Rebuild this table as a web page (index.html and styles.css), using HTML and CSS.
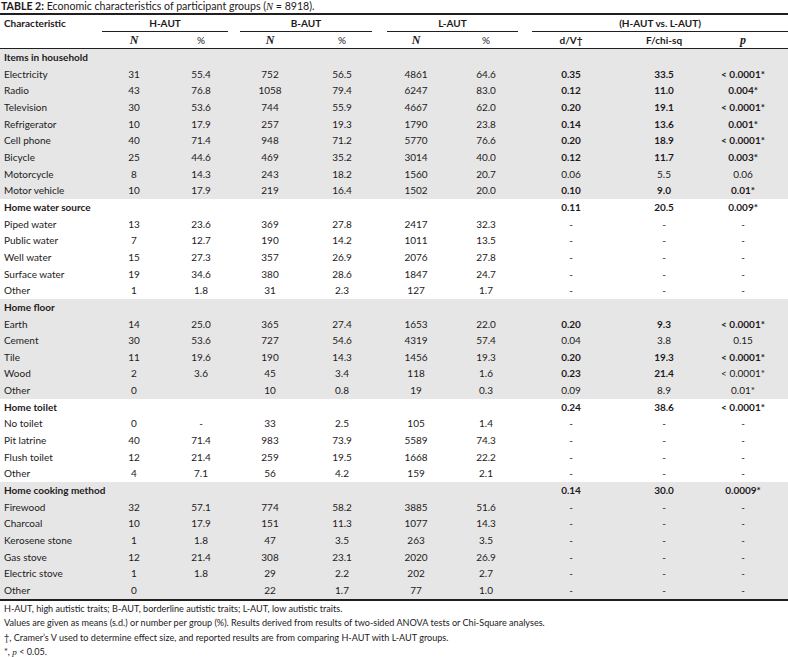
FILE: index.html
```html
<!DOCTYPE html>
<html>
<head>
<meta charset="utf-8">
<link rel="stylesheet" href="styles.css">
</head>
<body>
<div class="title"><b>TABLE 2:</b> Economic characteristics of participant groups (<i class="it">N</i> = 8918).</div>
<div class="wrap">
<table class="tbl">
<colgroup>
<col class="c0"><col class="c1"><col class="c2"><col class="c3"><col class="c4"><col class="c5"><col class="c6"><col class="c7"><col class="c8"><col class="c9">
</colgroup>
<thead>
<tr class="h1">
<th class="lbl">Characteristic</th>
<th colspan="2"><div class="grp g1">H-AUT</div></th>
<th colspan="2"><div class="grp g2">B-AUT</div></th>
<th colspan="2"><div class="grp g3">L-AUT</div></th>
<th colspan="3"><div class="grp g4">(H-AUT vs. L-AUT)</div></th>
</tr>
<tr class="h2">
<th></th>
<th><i class="it big">N</i></th><th class="reg">%</th>
<th><i class="it big">N</i></th><th class="reg">%</th>
<th><i class="it big">N</i></th><th class="reg lp">%</th>
<th>d/V†</th><th>F/chi-sq</th><th class="pp"><i class="it big">p</i></th>
</tr>
</thead>
<tbody class="gray">
<tr><td class="sec">Items in household</td><td></td><td></td><td></td><td></td><td></td><td class="lp"></td><td></td><td></td><td class="pp"></td></tr>
<tr><td>Electricity</td><td>31</td><td>55.4</td><td>752</td><td>56.5</td><td>4861</td><td class="lp">64.6</td><td class="b">0.35</td><td class="b">33.5</td><td class="b pp">&lt; 0.0001*</td></tr>
<tr><td>Radio</td><td>43</td><td>76.8</td><td>1058</td><td>79.4</td><td>6247</td><td class="lp">83.0</td><td class="b">0.12</td><td class="b">11.0</td><td class="b pp">0.004*</td></tr>
<tr><td>Television</td><td>30</td><td>53.6</td><td>744</td><td>55.9</td><td>4667</td><td class="lp">62.0</td><td class="b">0.20</td><td class="b">19.1</td><td class="b pp">&lt; 0.0001*</td></tr>
<tr><td>Refrigerator</td><td>10</td><td>17.9</td><td>257</td><td>19.3</td><td>1790</td><td class="lp">23.8</td><td class="b">0.14</td><td class="b">13.6</td><td class="b pp">0.001*</td></tr>
<tr><td>Cell phone</td><td>40</td><td>71.4</td><td>948</td><td>71.2</td><td>5770</td><td class="lp">76.6</td><td class="b">0.20</td><td class="b">18.9</td><td class="b pp">&lt; 0.0001*</td></tr>
<tr><td>Bicycle</td><td>25</td><td>44.6</td><td>469</td><td>35.2</td><td>3014</td><td class="lp">40.0</td><td class="b">0.12</td><td class="b">11.7</td><td class="b pp">0.003*</td></tr>
<tr><td>Motorcycle</td><td>8</td><td>14.3</td><td>243</td><td>18.2</td><td>1560</td><td class="lp">20.7</td><td>0.06</td><td>5.5</td><td class="pp">0.06</td></tr>
<tr><td>Motor vehicle</td><td>10</td><td>17.9</td><td>219</td><td>16.4</td><td>1502</td><td class="lp">20.0</td><td class="b">0.10</td><td class="b">9.0</td><td class="b pp">0.01*</td></tr>
</tbody>
<tbody>
<tr><td class="sec">Home water source</td><td></td><td></td><td></td><td></td><td></td><td class="lp"></td><td class="b">0.11</td><td class="b">20.5</td><td class="b pp">0.009*</td></tr>
<tr><td>Piped water</td><td>13</td><td>23.6</td><td>369</td><td>27.8</td><td>2417</td><td class="lp">32.3</td><td>-</td><td>-</td><td class="pp">-</td></tr>
<tr><td>Public water</td><td>7</td><td>12.7</td><td>190</td><td>14.2</td><td>1011</td><td class="lp">13.5</td><td>-</td><td>-</td><td class="pp">-</td></tr>
<tr><td>Well water</td><td>15</td><td>27.3</td><td>357</td><td>26.9</td><td>2076</td><td class="lp">27.8</td><td>-</td><td>-</td><td class="pp">-</td></tr>
<tr><td>Surface water</td><td>19</td><td>34.6</td><td>380</td><td>28.6</td><td>1847</td><td class="lp">24.7</td><td>-</td><td>-</td><td class="pp">-</td></tr>
<tr><td>Other</td><td>1</td><td>1.8</td><td>31</td><td>2.3</td><td>127</td><td class="lp">1.7</td><td>-</td><td>-</td><td class="pp">-</td></tr>
</tbody>
<tbody class="gray">
<tr><td class="sec">Home floor</td><td></td><td></td><td></td><td></td><td></td><td class="lp"></td><td></td><td></td><td class="pp"></td></tr>
<tr><td>Earth</td><td>14</td><td>25.0</td><td>365</td><td>27.4</td><td>1653</td><td class="lp">22.0</td><td class="b">0.20</td><td class="b">9.3</td><td class="b pp">&lt; 0.0001*</td></tr>
<tr><td>Cement</td><td>30</td><td>53.6</td><td>727</td><td>54.6</td><td>4319</td><td class="lp">57.4</td><td>0.04</td><td>3.8</td><td class="pp">0.15</td></tr>
<tr><td>Tile</td><td>11</td><td>19.6</td><td>190</td><td>14.3</td><td>1456</td><td class="lp">19.3</td><td class="b">0.20</td><td class="b">19.3</td><td class="b pp">&lt; 0.0001*</td></tr>
<tr><td>Wood</td><td>2</td><td>3.6</td><td>45</td><td>3.4</td><td>118</td><td class="lp">1.6</td><td class="b">0.23</td><td class="b">21.4</td><td class="pp">&lt; 0.0001*</td></tr>
<tr><td>Other</td><td>0</td><td></td><td>10</td><td>0.8</td><td>19</td><td class="lp">0.3</td><td>0.09</td><td>8.9</td><td class="pp">0.01*</td></tr>
</tbody>
<tbody>
<tr><td class="sec">Home toilet</td><td></td><td></td><td></td><td></td><td></td><td class="lp"></td><td class="b">0.24</td><td class="b">38.6</td><td class="b pp">&lt; 0.0001*</td></tr>
<tr><td>No toilet</td><td>0</td><td>-</td><td>33</td><td>2.5</td><td>105</td><td class="lp">1.4</td><td>-</td><td>-</td><td class="pp">-</td></tr>
<tr><td>Pit latrine</td><td>40</td><td>71.4</td><td>983</td><td>73.9</td><td>5589</td><td class="lp">74.3</td><td>-</td><td>-</td><td class="pp">-</td></tr>
<tr><td>Flush toilet</td><td>12</td><td>21.4</td><td>259</td><td>19.5</td><td>1668</td><td class="lp">22.2</td><td>-</td><td>-</td><td class="pp">-</td></tr>
<tr><td>Other</td><td>4</td><td>7.1</td><td>56</td><td>4.2</td><td>159</td><td class="lp">2.1</td><td>-</td><td>-</td><td class="pp">-</td></tr>
</tbody>
<tbody class="gray">
<tr><td class="sec">Home cooking method</td><td></td><td></td><td></td><td></td><td></td><td class="lp"></td><td class="b">0.14</td><td class="b">30.0</td><td class="b pp">0.0009*</td></tr>
<tr><td>Firewood</td><td>32</td><td>57.1</td><td>774</td><td>58.2</td><td>3885</td><td class="lp">51.6</td><td>-</td><td>-</td><td class="pp">-</td></tr>
<tr><td>Charcoal</td><td>10</td><td>17.9</td><td>151</td><td>11.3</td><td>1077</td><td class="lp">14.3</td><td>-</td><td>-</td><td class="pp">-</td></tr>
<tr><td>Kerosene stone</td><td>1</td><td>1.8</td><td>47</td><td>3.5</td><td>263</td><td class="lp">3.5</td><td>-</td><td>-</td><td class="pp">-</td></tr>
<tr><td>Gas stove</td><td>12</td><td>21.4</td><td>308</td><td>23.1</td><td>2020</td><td class="lp">26.9</td><td>-</td><td>-</td><td class="pp">-</td></tr>
<tr><td>Electric stove</td><td>1</td><td>1.8</td><td>29</td><td>2.2</td><td>202</td><td class="lp">2.7</td><td>-</td><td>-</td><td class="pp">-</td></tr>
<tr><td>Other</td><td>0</td><td></td><td>22</td><td>1.7</td><td>77</td><td class="lp">1.0</td><td>-</td><td>-</td><td class="pp">-</td></tr>
</tbody>
</table>
</div>
<div class="notes">
<p>H-AUT, high autistic traits; B-AUT, borderline autistic traits; L-AUT, low autistic traits.</p>
<p>Values are given as means (s.d.) or number per group (%). Results derived from results of two-sided ANOVA tests or Chi-Square analyses.</p>
<p>†, Cramer’s V used to determine effect size, and reported results are from comparing H-AUT with L-AUT groups.</p>
<p>*, <i class="it">p</i> &lt; 0.05.</p>
</div>
</body>
</html>
```
FILE: styles.css
```css
html, body {
  margin: 0;
  padding: 0;
  background: #ffffff;
}
body {
  width: 788px;
  font-family: Lato, "Open Sans", sans-serif;
  font-size: 10px;
  color: #1e1a1b;
}
.title {
  height: 13px;
  line-height: 13px;
  padding-left: 1px;
  font-size: 10.6px;
  white-space: nowrap;
}
.it {
  font-family: "Liberation Serif", serif;
  font-style: italic;
}
.big {
  font-size: 12px;
  font-weight: bold;
}
.wrap {
  border-top: 2px solid #231f20;
  border-bottom: 2px solid #231f20;
}
.tbl {
  width: 788px;
  border-collapse: collapse;
  border-spacing: 0;
  table-layout: fixed;
}
.c0 { width: 100px; }
.c1 { width: 68px; }
.c2 { width: 66px; }
.c3 { width: 72px; }
.c4 { width: 72px; }
.c5 { width: 76px; }
.c6 { width: 70px; }
.c7 { width: 94px; }
.c8 { width: 92px; }
.c9 { width: 78px; }
.tbl th, .tbl td {
  padding: 0;
  text-align: center;
  white-space: nowrap;
}
.tbl th {
  font-weight: bold;
}
.tbl th.reg {
  font-weight: normal;
}
.h1 th {
  height: 17px;
  vertical-align: top;
}
.h1 th.lbl {
  text-align: left;
  padding-left: 4px;
  line-height: 17px;
}
.grp {
  line-height: 16px;
  height: 16px;
  border-bottom: 1px solid #231f20;
}
.g1 { margin: 0 6px 0 2px; }
.g2 { margin: 0 6px 0 6px; }
.g3 { margin: 0 6px 0 9px; }
.g4 { margin: 0 0 0 8px; }
.h2 th {
  height: 16px;
  line-height: 16px;
  border-bottom: 1px solid #231f20;
}
.tbl td {
  height: 16.65px;
  line-height: 16.65px;
}
.tbl td:first-child {
  text-align: left;
  padding-left: 4px;
}
.tbl td.sec {
  font-weight: bold;
}
.tbl td.b {
  font-weight: bold;
}
.lp {
  padding-right: 6px !important;
}
.pp {
  padding-right: 12px !important;
}
.gray td {
  background: #e6e6e6;
}
.notes {
  padding: 1px 0 0 4px;
  font-size: 9.1px;
}
.notes p {
  margin: 0;
  line-height: 14.6px;
  white-space: nowrap;
}
```
